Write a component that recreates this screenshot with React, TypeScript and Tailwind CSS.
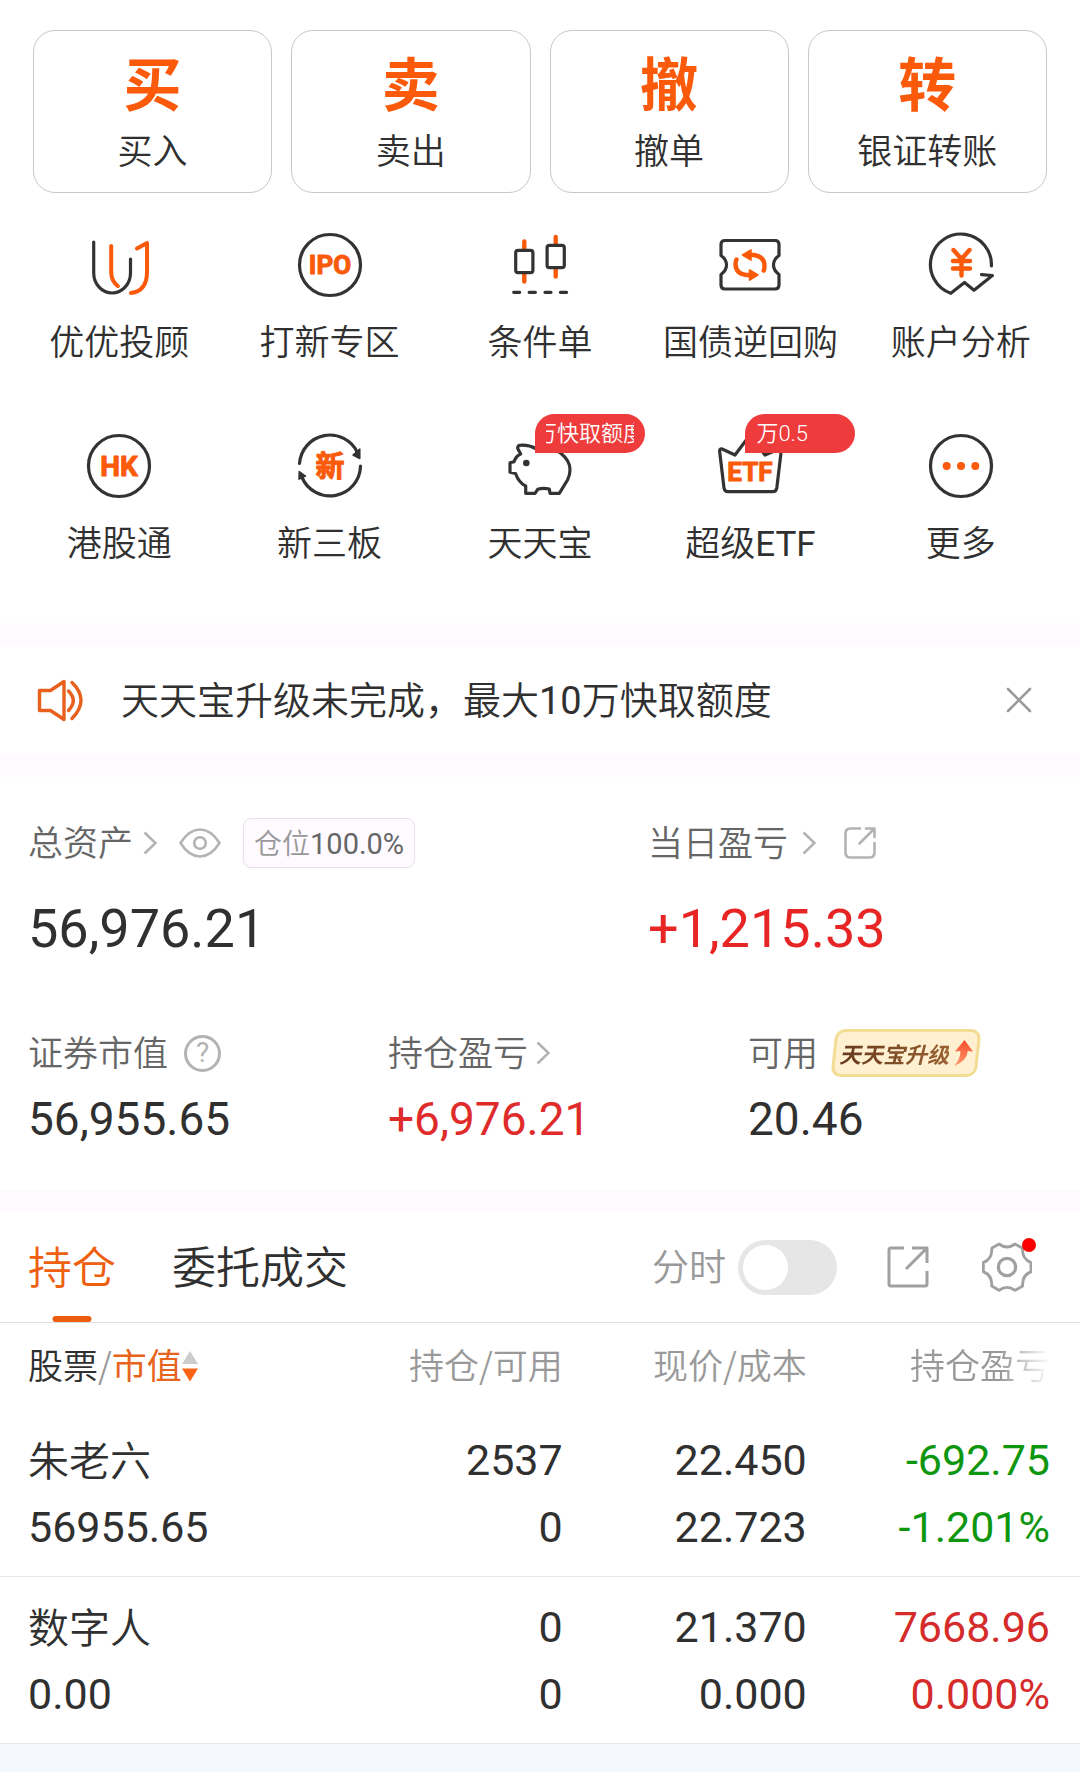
import type { ReactNode } from "react";

const DARK = "#333333";
const ORANGE = "#fa5a0a";

function IconFrame({ children }: { children: ReactNode }) {
  return (
    <svg
      viewBox="0 0 72 72"
      className="h-[72px] w-[72px] font-['Roboto','Noto_Sans_CJK_SC',sans-serif]"
      fill="none"
      stroke={DARK}
      strokeWidth={3.2}
      strokeLinecap="round"
      strokeLinejoin="round"
      aria-hidden="true"
    >
      {children}
    </svg>
  );
}

function IconText({ size, y, children }: { size: number; y: number; children: string }) {
  return (
    <text
      x="36"
      y={y}
      textAnchor="middle"
      fontSize={size}
      fontWeight={700}
      fill={ORANGE}
      stroke={ORANGE}
      strokeWidth={1}
    >
      {children}
    </text>
  );
}

const AdvisorIcon = () => (
  <IconFrame>
    <path d="M10.7 13V44a18.4 20 0 0 0 36.8 0V30" />
    <path stroke={ORANGE} strokeWidth={4} d="M28.2 17V43q0 9 6.6 14" />
    <path stroke={ORANGE} strokeWidth={4} d="M48 64q16-2 16-21V14L54 19.5" />
  </IconFrame>
);

const IpoIcon = () => (
  <IconFrame>
    <circle cx="36" cy="36" r="30.5" />
    <IconText size={26} y={45}>IPO</IconText>
  </IconFrame>
);

const ConditionIcon = () => (
  <IconFrame>
    <path stroke={ORANGE} strokeWidth={4.4} d="M20.3 12.5v7M20.3 45v7.5M51.7 8v7M51.7 40v7.5" />
    <rect x="11.7" y="21.3" width="17.2" height="22.4" rx="2.5" />
    <rect x="43.1" y="16.3" width="17.2" height="22.4" rx="2.5" />
    <path d="M9.7 63.3h6M25.2 63.3h6.2M41 63.3h6M56.4 63.3h6.2" />
  </IconFrame>
);

const RepoIcon = () => (
  <IconFrame>
    <path d="M11 11.5H61q4 0 4 4V26.5q-5.5 4-5.5 9.5t5.5 9.5V56q0 4-4 4H11q-4 0-4-4V45.5q5.5-4 5.5-9.5T7 26.5V15.5q0-4 4-4Z" />
    <path stroke={ORANGE} strokeWidth={4.4} d="M36 26h4q10.500 1.500 10.500 11 0 2.500-.8 4.600M36 46h-4q-10.500-1.500-10.500-11 0-2.500 1-4.500" />
    <path fill={ORANGE} stroke={ORANGE} strokeWidth={1.5} d="M28.500 26 37 20.800v10.400ZM44 46l-8.500-5.200v10.400Z" />
  </IconFrame>
);

const AnalysisIcon = () => (
  <IconFrame>
    <path d="M66.400 37A30.500 30.500 0 1 0 25.800 64.300L39.500 53.500 49 61.200 67.400 46.500 56.500 45.600" />
    <path stroke={ORANGE} strokeWidth={4.4} d="m28.500 21 8 9 8-9M36.500 31v15.500M28 32h17M28 39.500h17" />
  </IconFrame>
);

const HkIcon = () => (
  <IconFrame>
    <circle cx="36" cy="36" r="30.5" />
    <IconText size={28} y={46}>HK</IconText>
  </IconFrame>
);

const NewBoardIcon = () => (
  <IconFrame>
    <path d="M5.500 33.500A30.500 30.500 0 0 1 63.500 22.500M66.500 36A30.500 30.500 0 0 1 8 47.500" />
    <path fill={DARK} strokeWidth={1.5} d="m59 25 6.800-6v9.500ZM5.200 41.500l6.300 4.500-6.500 3.200Z" />
    <IconText size={29} y={47}>新</IconText>
  </IconFrame>
);

const PiggyIcon = () => (
  <IconFrame>
    <path d="M16.700 24 13.700 18.500q-.5-3.300 3.500-3.300 8-.4 14.500 3.300Q45 16 56 22.500 66.500 31 66 40q0 5-2.500 10L55.300 63.300H46L45.300 59Q39 57.500 33.700 59.300L31 63.300H21.700V56Q15 53 11.500 43.500L6 42.300V32.700L10 31.700Q12 26 16.700 24Z" />
    <circle cx="22.3" cy="33" r="3.3" fill={DARK} stroke="none" />
  </IconFrame>
);

const EtfIcon = () => (
  <IconFrame>
    <path d="M5.600 21q0-2.500 2.500-2L21 25 36 5 51 25 65 19q2.500-.3 2.200 2L62.800 58q-.6 3.700-4 3.700H14q-3.500 0-4-3.700Z" />
    <IconText size={26} y={51}>ETF</IconText>
  </IconFrame>
);

const MoreIcon = () => (
  <IconFrame>
    <circle cx="36" cy="36" r="30.5" />
    <g fill={ORANGE} stroke="none">
      <circle cx="21.7" cy="36" r="4" />
      <circle cx="36" cy="36" r="4" />
      <circle cx="50.3" cy="36" r="4" />
    </g>
  </IconFrame>
);

function Chevron() {
  return (
    <svg viewBox="0 0 14 24" className="h-6 w-[14px]" fill="none" stroke="#b3b3b3" strokeWidth={2.6} aria-hidden="true">
      <path d="m1.500 1.500 11 10.500-11 10.500" />
    </svg>
  );
}

/* Sets Latin letters and digits in Roboto, whatever surrounds them. */
function Latin({ children }: { children: ReactNode }) {
  return <span className="font-['Roboto',sans-serif] leading-none font-normal">{children}</span>;
}

function Caption({ children }: { children: string }) {
  return <span className="pb-1">{children}</span>;
}

const trades = [
  { glyph: "买", label: "买入" },
  { glyph: "卖", label: "卖出" },
  { glyph: "撤", label: "撤单" },
  { glyph: "转", label: "银证转账" },
];

const services = [
  { label: "优优投顾", Icon: AdvisorIcon },
  { label: "打新专区", Icon: IpoIcon },
  { label: "条件单", Icon: ConditionIcon },
  { label: "国债逆回购", Icon: RepoIcon },
  { label: "账户分析", Icon: AnalysisIcon },
  { label: "港股通", Icon: HkIcon },
  { label: "新三板", Icon: NewBoardIcon },
  { label: "天天宝", Icon: PiggyIcon, badge: "万快取额度", scrolled: true },
  { label: "超级", latin: "ETF", Icon: EtfIcon, badge: "万0.5" },
  { label: "更多", Icon: MoreIcon },
];

const holdings = [
  { name: "朱老六", value: "56955.65", held: "2537", free: "0", price: "22.450", cost: "22.723", gain: "-692.75", rate: "-1.201%", tone: "text-[#0f960f]" },
  { name: "数字人", value: "0.00", held: "0", free: "0", price: "21.370", cost: "0.000", gain: "7668.96", rate: "0.000%", tone: "text-[#d52b2b]" },
];

const Divider = () => <div className="h-[22px] bg-[#fefaff]" />;

function Amount({ size, tone = "", children }: { size: "large" | "small"; tone?: string; children: string }) {
  const scale = size === "large" ? "mt-[26px] text-[54px] leading-[70px]" : "mt-[14px] text-[46px] leading-[56px]";
  return <div className={`font-['Roboto',sans-serif] font-normal ${scale} ${tone}`}>{children}</div>;
}

function Pair({ top, bottom }: { top: string; bottom: string }) {
  return (
    <>
      <div>{top}</div>
      <div>{bottom}</div>
    </>
  );
}

export default function App() {
  return (
    <main className="min-h-screen w-full overflow-hidden bg-white font-['Noto_Sans_CJK_SC',sans-serif] font-[350] text-[#303030]">
      <section className="grid grid-cols-4 gap-[19px] px-[33px] pt-[30px]">
        {trades.map((t) => (
          <button key={t.label} type="button" className="flex h-[163px] flex-col items-center rounded-[22px] border border-[#c8c8c8] pt-[18px]">
            <span className="text-[58px] leading-[64px] font-bold text-[#fa5a0a]" aria-hidden="true">{t.glyph}</span>
            <span className="mt-3 text-[35px] leading-[48px]">{t.label}</span>
          </button>
        ))}
      </section>

      <section className="grid grid-cols-5 gap-y-16 px-[14px] pt-9 pb-14">
        {services.map(({ label, latin, Icon, badge, scrolled }) => (
          <button key={label} type="button" className="flex flex-col items-center">
            <span className="relative">
              <Icon />
              {badge && (
                <span className="absolute -top-4 left-[31px] h-[39px] w-[110px] rounded-[20px] rounded-bl-none bg-[#ee3b3b] px-[11px] font-['Roboto','Noto_Sans_CJK_SC',sans-serif] text-[22px] leading-[39px] text-white">
                  <span className={scrolled ? "flex justify-center overflow-hidden whitespace-nowrap" : "flex"}>{badge}</span>
                </span>
              )}
            </span>
            <span className="mt-[15px] mb-[2px] text-[35px] leading-[48px] whitespace-nowrap">
              {label}
              {latin && <Latin>{latin}</Latin>}
            </span>
          </button>
        ))}
      </section>

      <Divider />

      <section className="flex h-[110px] items-center pr-12 pl-9">
        <svg viewBox="0 0 48 44" className="h-11 w-12" fill="none" stroke="#e8601c" strokeWidth={3.4} strokeLinecap="round" strokeLinejoin="round" aria-hidden="true">
          <path d="M3.500 12.500H14.500L28 3.500V41.500L14.500 32.500H3.500Z" />
          <path d="M32.500 13q9.500 9.500 0 19.500M36 4.500q18 17.500 0 36" />
        </svg>
        <p className="ml-[37px] flex-1 pb-1 text-[38px] leading-[52px]">
          天天宝升级未完成，最大<Latin>10</Latin>万快取额度
        </p>
        <button type="button" aria-label="关闭">
          <svg viewBox="0 0 26 26" className="h-[26px] w-[26px]" stroke="#999999" strokeWidth={2.6} strokeLinecap="round" aria-hidden="true">
            <path d="m2 2 22 22M24 2 2 24" />
          </svg>
        </button>
      </section>

      <Divider />

      <section className="pt-[41px] pb-[43px] pl-7">
        <div className="grid grid-cols-[620fr_432fr]">
          <div>
            <div className="flex h-[50px] items-center text-[35px] leading-[50px] text-[#666666]">
              <a href="#assets" className="flex items-center gap-[10px]"><Caption>总资产</Caption><Chevron /></a>
              <button type="button" aria-label="隐藏金额" className="ml-[22px]">
                <svg viewBox="0 0 42 30" className="h-[30px] w-[42px]" fill="none" stroke="#b3b3b3" strokeWidth={2.6} aria-hidden="true">
                  <path d="M1.500 15Q10 1.500 21 1.500T40.500 15Q32 28.500 21 28.500T1.500 15Z" />
                  <circle cx="21" cy="15" r="5.8" />
                </svg>
              </button>
              <span className="ml-[22px] flex h-[50px] items-center rounded-lg border border-[#e6e0e8] bg-[#fefaff] px-[10px] text-[28px] leading-[48px]">
                <span className="pb-[2px]">
                  <span className="text-[#999999]">仓位</span>
                  <span className="font-['Roboto',sans-serif] text-[29px] leading-none font-normal">100.0%</span>
                </span>
              </span>
            </div>
            <Amount size="large">56,976.21</Amount>
          </div>
          <div>
            <div className="flex h-[50px] items-center text-[35px] leading-[50px] text-[#666666]">
              <a href="#today" className="flex items-center gap-[14px]"><Caption>当日盈亏</Caption><Chevron /></a>
              <button type="button" aria-label="分享当日盈亏" className="ml-7">
                <svg viewBox="0 0 32 32" className="h-8 w-8" fill="none" stroke="#b3b3b3" strokeWidth={2.6} strokeLinecap="round" strokeLinejoin="round" aria-hidden="true">
                  <path d="M16 1.500H6.500q-5 0-5 5v19q0 5 5 5h19q5 0 5-5V16M22 1.500h8.500V10M30 2 15.500 16.500" />
                </svg>
              </button>
            </div>
            <Amount size="large" tone="text-[#e82525]">+1,215.33</Amount>
          </div>
        </div>

        <div className="mt-[65px] grid grid-cols-[360fr_360fr_332fr]">
          <div>
            <div className="flex h-12 items-center text-[35px] leading-[48px] text-[#666666]">
              <Caption>证券市值</Caption>
              <button type="button" aria-label="证券市值说明" className="ml-4 flex h-[37px] w-[37px] items-center justify-center rounded-full border-[3px] border-[#b3b3b3] font-['Roboto',sans-serif] text-[28px] leading-none font-normal text-[#b3b3b3]">?</button>
            </div>
            <Amount size="small">56,955.65</Amount>
          </div>
          <div>
            <div className="flex h-12 items-center text-[35px] leading-[48px] text-[#666666]">
              <a href="#gain" className="flex items-center gap-2"><Caption>持仓盈亏</Caption><Chevron /></a>
            </div>
            <Amount size="small" tone="text-[#e02b2b]">+6,976.21</Amount>
          </div>
          <div>
            <div className="flex h-12 items-center text-[35px] leading-[48px] text-[#666666]">
              <Caption>可用</Caption>
              <button type="button" className="relative ml-3 flex h-12 w-[152px] items-center justify-center gap-1">
                <span className="absolute inset-y-0 right-[3px] left-[3px] -skew-x-6 rounded-[10px] border-[3px] border-[#f3dc94] bg-[#fff0d2]" />
                <span className="relative bg-linear-to-r from-[#65391d] to-[#9a6231] bg-clip-text text-[22px] leading-[30px] font-bold text-transparent italic">天天宝升级</span>
                <svg viewBox="0 0 20 26" className="relative h-[26px] w-5" aria-hidden="true">
                  <defs>
                    <linearGradient id="rise" x1="0" y1="0" x2="0" y2="1">
                      <stop offset="0" stopColor="#f94b2c" />
                      <stop offset="1" stopColor="#ff9a6b" />
                    </linearGradient>
                  </defs>
                  <path fill="url(#rise)" d="M11.500 0 20 11.500 14.800 11Q14 21 1 26 7.500 19 7.500 11L2 11.500Z" />
                </svg>
              </button>
            </div>
            <Amount size="small">20.46</Amount>
          </div>
        </div>
      </section>

      <Divider />

      <section className="flex h-[111px] items-stretch border-b border-[#dedede] pr-12 pl-7">
        <div role="tablist" className="flex gap-14 text-[44px] leading-[60px]">
          <button type="button" role="tab" aria-selected="true" className="relative pb-1 text-[#ee600f]">
            持仓
            <span className="absolute bottom-0 left-1/2 h-[6px] w-[39px] -translate-x-1/2 rounded-full bg-[#ee5c10]" />
          </button>
          <button type="button" role="tab" aria-selected="false" className="pb-1">委托成交</button>
        </div>
        <div className="ml-auto flex items-center">
          <label className="flex items-center gap-3 text-[37px] leading-[50px] text-[#999999]">
            <Caption>分时</Caption>
            <input type="checkbox" role="switch" className="peer sr-only" />
            <span className="flex h-[55px] w-[99px] items-center rounded-full bg-[#e6e6e6] px-[5px] peer-checked:justify-end peer-checked:bg-[#ee600f]">
              <span className="h-[45px] w-[45px] rounded-full bg-white" />
            </span>
          </label>
          <button type="button" aria-label="分享持仓" className="ml-[50px]">
            <svg viewBox="0 0 42 42" className="h-[42px] w-[42px]" fill="none" stroke="#a0a0a0" strokeWidth={3} strokeLinejoin="round" aria-hidden="true">
              <path d="M17 2H4q-2 0-2 2V38q0 2 2 2H38q2 0 2-2V25M25 2H40V17M40 2 19 23" />
            </svg>
          </button>
          <button type="button" aria-label="设置" className="relative ml-[53px]">
            <svg viewBox="0 0 150 150" className="h-[50px] w-[50px]" fill="none" stroke="#a0a0a0" strokeWidth={8.5} strokeLinejoin="round" aria-hidden="true">
              <path d="M51 6 29 19Q32 50 4 62V89Q32 101 29 132L51 145Q75 127 99 145L122 132Q119 101 147 89V62Q119 50 122 19L99 6Q75 24 51 6Z" />
              <circle cx="75" cy="75" r="26" strokeWidth={9.5} />
            </svg>
            <span className="absolute -top-1 -right-1 h-[14px] w-[14px] rounded-full bg-[#fb0000]" />
          </button>
        </div>
      </section>

      <table className="w-full table-fixed border-collapse">
        <thead>
          <tr className="h-[87px] text-right text-[35px] leading-[50px] whitespace-nowrap text-[#999999] [&>th]:pb-[5px] [&>th]:font-[350]">
            <th scope="col" className="w-[29.5%] pl-7 text-left">
              <button type="button" className="flex items-center">
                <span className="text-[#303030]">股票</span>
                <span>/</span>
                <span className="font-normal text-[#e8641c]">市值</span>
                <svg viewBox="0 0 16 32" className="mt-1 h-8 w-4" aria-hidden="true">
                  <path fill="#cccccc" d="M8 1 16 14H0Z" />
                  <path fill="#fa6414" d="M0 18.500H16L8 31.500Z" />
                </svg>
              </button>
            </th>
            <th scope="col">持仓/可用</th>
            <th scope="col">现价/成本</th>
            <th scope="col" className="w-[25.3%] pr-[30px]">
              <span className="ml-auto block w-fit mask-r-from-[65%] mask-r-to-100%">持仓盈亏</span>
            </th>
          </tr>
        </thead>
        <tbody>
          {holdings.map((h) => (
            <tr key={h.name} className="border-b border-[#e8e8e8] text-right font-['Roboto',sans-serif] text-[43px] leading-[67px] font-normal [&>td]:pt-[17px] [&>td]:pb-[15px]">
              <td className="pl-7 text-left">
                <div className="mb-1 font-['Noto_Sans_CJK_SC',sans-serif] text-[41px] leading-[63px] font-[350]">{h.name}</div>
                <div>{h.value}</div>
              </td>
              <td><Pair top={h.held} bottom={h.free} /></td>
              <td><Pair top={h.price} bottom={h.cost} /></td>
              <td className={`pr-[30px] ${h.tone}`}><Pair top={h.gain} bottom={h.rate} /></td>
            </tr>
          ))}
        </tbody>
      </table>
      <div className="h-7 bg-[#f5f9fe]" />
    </main>
  );
}
